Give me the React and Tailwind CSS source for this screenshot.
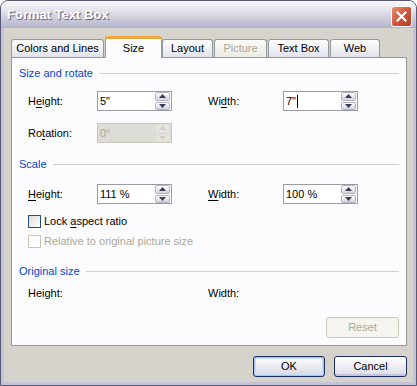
import React from 'react';

// Word 2003 "Format Text Box" dialog, Size tab (XP silver theme)

function U({ children }) {
  return <span className="underline underline-offset-[2px]">{children}</span>;
}

function Arrow({ up, color }) {
  return (
    <svg width="7" height="4" viewBox="0 0 7 4">
      <path d={up ? 'M0 4 L3.5 0 L7 4 Z' : 'M0 0 L3.5 4 L7 0 Z'} fill={color} />
    </svg>
  );
}

function Spin({ disabled }) {
  const color = disabled ? '#cfcdc4' : '#3b3b55';
  const btn = disabled
    ? 'border-[#e0ded6] bg-[#e6e4df]'
    : 'border-[#b4b3c6] bg-gradient-to-b from-white to-[#d3d3df]';
  return (
    <div className="flex flex-col gap-px w-[15px] h-[18px]">
      <div className={`flex-1 rounded-[2px] border flex items-center justify-center ${btn}`}>
        <Arrow up color={color} />
      </div>
      <div className={`flex-1 rounded-[2px] border flex items-center justify-center ${btn}`}>
        <Arrow color={color} />
      </div>
    </div>
  );
}

function SpinBox({ value, disabled, caret }) {
  return (
    <div
      className={`w-[75px] h-[20px] border flex items-center pl-[2px] pr-px ${
        disabled ? 'border-[#c9c7ba] bg-[#dedcd6] text-[#aca899]' : 'border-[#9b9ca8] bg-white text-black'
      }`}
    >
      <div className="flex-1 flex items-center">
        {value}
        {caret && <span className="inline-block w-px h-[13px] bg-black ml-px" />}
      </div>
      <Spin disabled={disabled} />
    </div>
  );
}

function Heading({ children }) {
  return (
    <div className="flex items-center h-[13px] pl-[7px] pr-[7px] gap-[6px]">
      <span className="text-[#0046d5] whitespace-nowrap">{children}</span>
      <div className="flex-1 h-px bg-[#cfcfd6]" />
    </div>
  );
}

function Row({ l1, l2, v1, v2, caret2 }) {
  return (
    <div className="flex items-center pl-[16px]">
      <div className="w-[69px]">{l1}</div>
      <SpinBox value={v1} />
      <div className="w-[36px]" />
      <div className="w-[75px]">{l2}</div>
      <SpinBox value={v2} caret={caret2} />
    </div>
  );
}

function Check({ label, disabled }) {
  return (
    <div className={`flex items-center pl-[16px] h-[13px] gap-[3px] ${disabled ? 'text-[#aca899]' : ''}`}>
      <div
        className={`w-[13px] h-[13px] border ${
          disabled ? 'border-[#cac8bb] bg-white' : 'border-[#1c5180] bg-gradient-to-br from-[#dcdcd7] to-white'
        }`}
      />
      <span>{label}</span>
    </div>
  );
}

const tabs = [
  { name: 'Colors and Lines', w: 'w-[93px]', ml: 'ml-0' },
  { name: 'Size', w: 'w-[57px]', ml: 'ml-px', active: true },
  { name: 'Layout', w: 'w-[51px]', ml: 'ml-0' },
  { name: 'Picture', w: 'w-[53px]', ml: 'ml-px', disabled: true },
  { name: 'Text Box', w: 'w-[61px]', ml: 'ml-[1px]' },
  { name: 'Web', w: 'w-[50px]', ml: 'ml-[1px]' },
];

export default function App() {
  return (
    <div className="w-[417px] h-[386px] bg-white">
      <div className="w-[417px] h-[386px] rounded-t-[8px] border border-[#585874] bg-[#c5c4d6] overflow-hidden flex flex-col font-['Liberation_Sans',Arial,sans-serif] text-[11px] leading-[13px] text-black">
        {/* title bar */}
        <div className="h-[27px] shrink-0 flex items-center justify-between pl-[6px] pr-[4px] bg-gradient-to-b from-[#fbfbfd] via-[#d9d8e5] to-[#b4b3c9]">
          <span className="text-white font-bold text-[13px] [text-shadow:1px_1px_1px_#5a5a7a]">Format Text Box</span>
          <div className="w-[21px] h-[21px] mt-[3px] rounded-[3px] border border-white bg-gradient-to-br from-[#e9906f] via-[#d2553a] to-[#b23a20] flex items-center justify-center">
            <svg width="11" height="11" viewBox="0 0 11 11">
              <path d="M1.5 1.5 L9.5 9.5 M9.5 1.5 L1.5 9.5" stroke="white" strokeWidth="2.2" strokeLinecap="square" />
            </svg>
          </div>
        </div>

        {/* body */}
        <div className="flex-1 mx-[3px] mb-[3px] bg-[#d6d3cc] pt-[8px] pl-[7px] pr-[6px] flex flex-col">
          {/* tabs */}
          <div className="flex items-end h-[21px] relative z-10">
            {tabs.map((t) =>
              t.active ? (
                <div
                  key={t.name}
                  className={`${t.w} ${t.ml} h-[22px] -mb-px rounded-t-[3px] border border-b-0 border-[#919b9c] border-t-[3px] border-t-[#f0a63b] bg-[#fcfcfe] flex items-center justify-center`}
                >
                  {t.name}
                </div>
              ) : (
                <div
                  key={t.name}
                  className={`${t.w} ${t.ml} h-[18px] rounded-t-[3px] border border-b-0 border-[#919b9c] flex items-center justify-center ${
                    t.disabled
                      ? 'bg-gradient-to-b from-[#fbfbf8] to-[#ecebe3] text-[#aca899]'
                      : 'bg-gradient-to-b from-white to-[#e2e2ec]'
                  }`}
                >
                  {t.name}
                </div>
              )
            )}
          </div>

          {/* panel */}
          <div className="h-[289px] border border-[#919b9c] bg-[#fcfcfe] flex flex-col">
            <div className="mt-[9px]">
              <Heading>Size and rotate</Heading>
            </div>
            <div className="mt-[11px]">
              <Row
                l1={<>H<U>e</U>ight:</>}
                l2={<>Wi<U>d</U>th:</>}
                v1={'5"'}
                v2={'7"'}
                caret2
              />
            </div>
            <div className="mt-[12px] flex items-center pl-[16px]">
              <div className="w-[69px]">Ro<U>t</U>ation:</div>
              <SpinBox value="0°" disabled />
            </div>
            <div className="mt-[15px]">
              <Heading>Scale</Heading>
            </div>
            <div className="mt-[13px]">
              <Row
                l1={<><U>H</U>eight:</>}
                l2={<><U>W</U>idth:</>}
                v1="111 %"
                v2="100 %"
              />
            </div>
            <div className="mt-[11px]">
              <Check label={<>Lock <U>a</U>spect ratio</>} />
            </div>
            <div className="mt-[7px]">
              <Check label="Relative to original picture size" disabled />
            </div>
            <div className="mt-[17px]">
              <Heading>Original size</Heading>
            </div>
            <div className="mt-[9px] flex items-center pl-[16px] h-[13px]">
              <div className="w-[180px]">Height:</div>
              <div>Width:</div>
            </div>
            <div className="mt-[17px] flex justify-end pr-[7px]">
              <div className="w-[73px] h-[21px] rounded-[3px] border border-[#c9c7ba] bg-[#f5f4ee] text-[#aca899] flex items-center justify-center">
                Reset
              </div>
            </div>
          </div>

          {/* dialog buttons */}
          <div className="mt-[10px] flex justify-end gap-[9px]">
            <div className="w-[72px] h-[21px] rounded-[3px] border border-[#1d2d5e] bg-gradient-to-b from-white to-[#d8d8e6] shadow-[inset_0_0_0_1px_#a8c4ef,inset_0_0_0_2px_#c9dcf6] flex items-center justify-center">
              OK
            </div>
            <div className="w-[73px] h-[21px] rounded-[3px] border border-[#1d2d5e] bg-gradient-to-b from-white to-[#dcdce8] shadow-[inset_0_-2px_0_#c6c5d7] flex items-center justify-center">
              Cancel
            </div>
          </div>
        </div>
      </div>
    </div>
  );
}
